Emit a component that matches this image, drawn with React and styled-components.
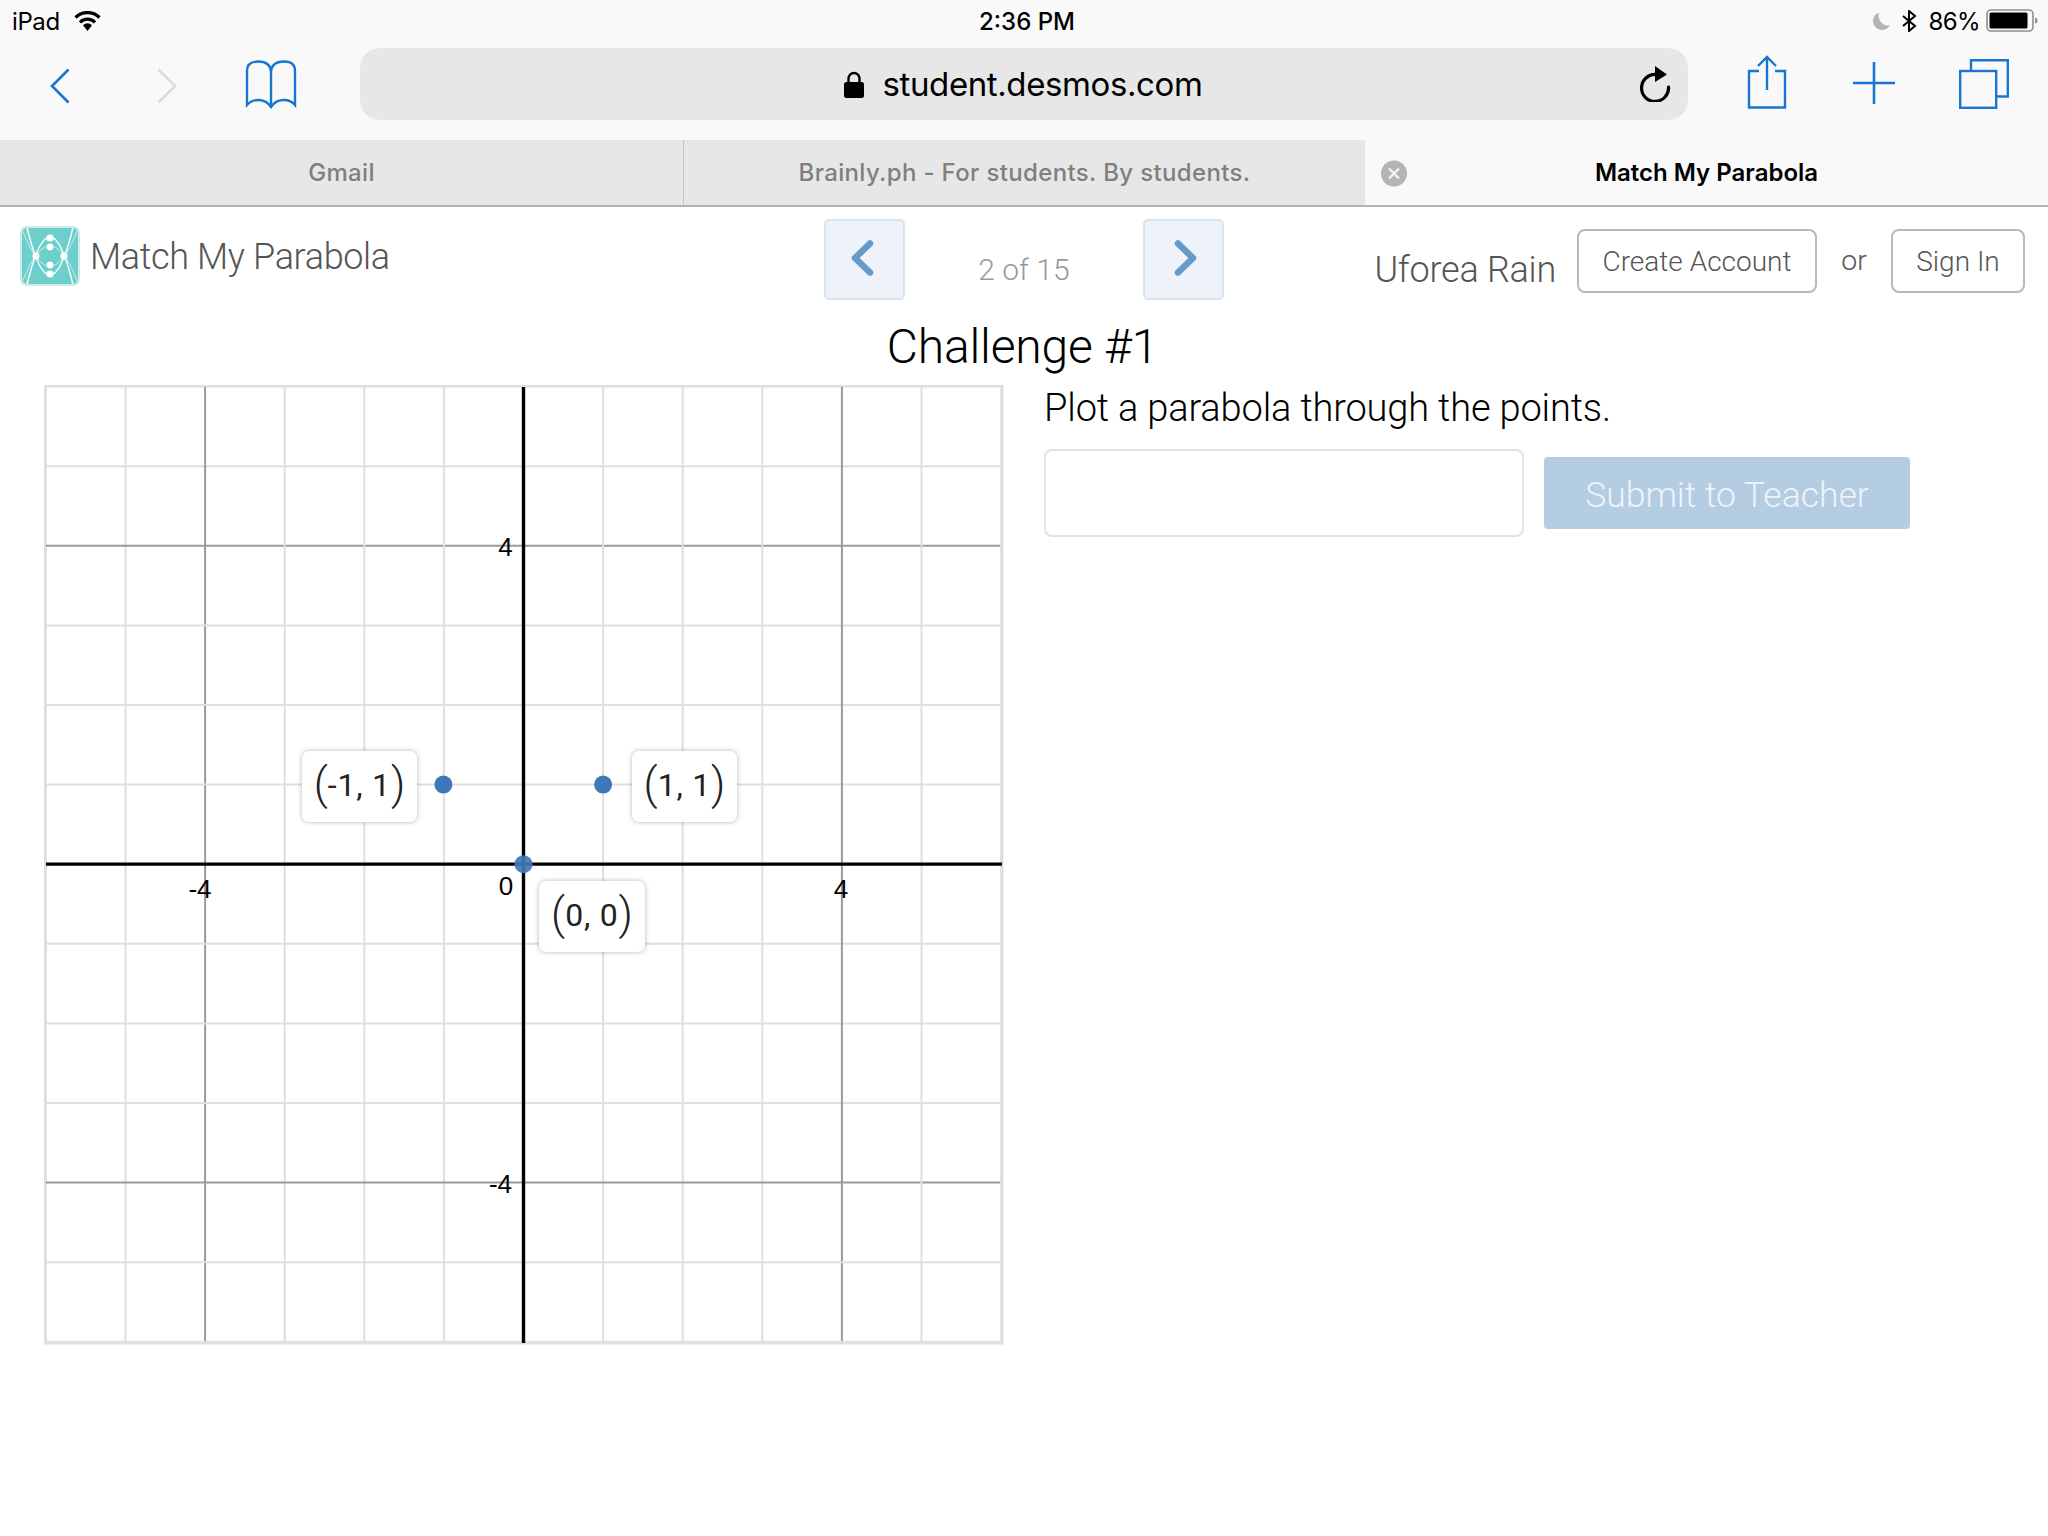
import React from "react";
import styled, { createGlobalStyle } from "styled-components";

const Global = createGlobalStyle`
  html, body { margin: 0; padding: 0; background: #fff; }
  #root { width: 2048px; height: 1536px; overflow: hidden; }
  * { box-sizing: border-box; }
`;

const SF = `Inter, "Liberation Sans", sans-serif`;
const HN = `Roboto, "Liberation Sans", sans-serif`;

const Page = styled.div`
  width: 2048px;
  height: 1536px;
  background: #fff;
  display: flex;
  flex-direction: column;
  font-family: ${SF};
`;

/* ---------- iOS chrome ---------- */
const StatusBar = styled.div`
  height: 48px;
  background: #f9f9f9;
  display: grid;
  grid-template-columns: 1fr auto 1fr;
  align-items: center;
  padding: 0 10px 6px 12px;
  font-size: 24px;
  color: #000;
`;
const StatusLeft = styled.div`
  display: flex;
  align-items: center;
  gap: 14px;
  letter-spacing: -0.4px;
`;
const Clock = styled.div`
  font-weight: 500;
  font-size: 24px;
  letter-spacing: 0;
  transform: translateX(2px);
`;
const StatusRight = styled.div`
  display: flex;
  align-items: center;
  justify-content: flex-end;
  gap: 12px;
  letter-spacing: -0.6px;
`;
const BatteryIcon = styled.svg`
  margin-left: -6px;
`;
const Toolbar = styled.div`
  height: 92px;
  background: #f9f9f9;
  display: flex;
  align-items: flex-start;
  color: #1876d2;
`;
const ToolSlot = styled.div`
  width: ${(p) => p.$w}px;
  height: 72px;
  flex: none;
  display: flex;
  align-items: center;
  justify-content: center;
  padding-top: ${(p) => p.$pt || 0}px;
  padding-bottom: ${(p) => p.$pb || 0}px;
`;
const UrlBar = styled.div`
  width: 1328px;
  height: 72px;
  margin-left: ${(p) => p.$ml}px;
  flex: none;
  background: #e7e7e7;
  border-radius: 20px;
  position: relative;
  display: flex;
  align-items: center;
  justify-content: center;
  gap: 19px;
  padding-right: 2px;
`;
const UrlText = styled.span`
  font-size: 33px;
  color: #000;
  font-weight: 400;
  letter-spacing: -0.4px;
`;
const ReloadBtn = styled.div`
  position: absolute;
  left: 1279px;
  top: 18px;
  display: flex;
`;
const TabBar = styled.div`
  height: 67px;
  flex: none;
  display: grid;
  grid-template-columns: 684px 681px 683px;
  border-bottom: 2px solid #b4b4b4;
`;
const Tab = styled.div`
  position: relative;
  display: flex;
  align-items: center;
  justify-content: center;
  background: ${(p) => (p.$active ? "#f9f9f9" : "#e7e7e7")};
  color: ${(p) => (p.$active ? "#000" : "#7f7f7f")};
  font-size: 24px;
  font-weight: ${(p) => (p.$active ? 600 : 500)};
  letter-spacing: ${(p) => (p.$active ? "0" : "0.35px")};
  border-right: ${(p) => (p.$divider ? "1px solid #c4c4c4" : "none")};
`;
const TabClose = styled.div`
  position: absolute;
  left: 16px;
  top: 20px;
  display: flex;
`;

/* ---------- app header ---------- */
const Header = styled.header`
  height: 103px;
  flex: none;
  display: flex;
  align-items: flex-start;
`;
const Brand = styled.div`
  width: 824px;
  flex: none;
  display: flex;
  align-items: center;
  gap: 10px;
  padding: 18px 0 0 20px;
`;
const BrandName = styled.div`
  font-family: ${HN};
  font-weight: 300;
  font-size: 36px;
  color: #555;
  letter-spacing: -0.35px;
  line-height: 60px;
  padding-top: 2px;
`;
const Pager = styled.div`
  width: 400px;
  flex: none;
  display: flex;
  justify-content: space-between;
  padding-top: 12px;
`;
const PageBtn = styled.div`
  width: 81px;
  height: 81px;
  background: #edf3f9;
  border: 2px solid #d8e4ef;
  border-radius: 5px;
  display: flex;
  align-items: center;
  justify-content: center;
  padding-bottom: 3px;
  padding-right: ${(p) => (p.$dir === "left" ? 5 : 0)}px;
  padding-left: ${(p) => (p.$dir === "right" ? 4 : 0)}px;
`;
const PageCount = styled.div`
  font-family: ${HN};
  font-weight: 300;
  font-size: 30px;
  color: #999;
  line-height: 36px;
  margin-top: 33px;
`;
const Account = styled.div`
  flex: 1;
  display: flex;
  align-items: flex-start;
  padding: 22px 23px 0 0;
  justify-content: flex-end;
`;
const UserName = styled.div`
  font-family: ${HN};
  font-weight: 300;
  font-size: 36px;
  color: #555;
  line-height: 64px;
  margin: 9px 21px 0 0;
  letter-spacing: -0.25px;
`;
const OutlineBtn = styled.div`
  height: 64px;
  width: ${(p) => p.$w}px;
  border: 2px solid #b9b9b9;
  border-radius: 8px;
  font-family: ${HN};
  font-weight: 300;
  font-size: 28px;
  color: #555;
  display: flex;
  align-items: center;
  justify-content: center;
`;
const OrText = styled.div`
  font-family: ${HN};
  font-weight: 300;
  font-size: 28.5px;
  color: #555;
  line-height: 64px;
  width: 74px;
  text-align: center;
`;

/* ---------- content ---------- */
const Title = styled.h1`
  margin: 0;
  height: 75px;
  flex: none;
  font-family: ${HN};
  font-weight: 300;
  font-size: 48px;
  line-height: 74px;
  color: #000;
  text-align: center;
  padding-right: 3px;
  letter-spacing: -0.2px;
`;
const Main = styled.main`
  display: flex;
  align-items: flex-start;
  padding-left: 44px;
  gap: 40px;
`;
const Graph = styled.div`
  position: relative;
  width: 960px;
  height: 960px;
  flex: none;
`;
const PointCard = styled.div`
  position: absolute;
  height: 71px;
  padding-bottom: 3px;
  background: #fff;
  border-radius: 7px;
  box-shadow: 0 0 5px rgba(0, 0, 0, 0.3);
  font-family: Roboto, "Liberation Sans", sans-serif;
  font-weight: 400;
  font-size: 32px;
  color: #222;
  display: flex;
  align-items: center;
  justify-content: center;
  letter-spacing: 0.8px;
  white-space: pre;
`;
const Paren = styled.span`
  font-family: Roboto, "Liberation Sans", sans-serif;
  font-weight: 300;
  font-size: 44px;
  line-height: 1;
  letter-spacing: 0;
  transform: translateY(-1px);
`;
const Side = styled.section`
  display: flex;
  flex-direction: column;
`;
const Prompt = styled.p`
  margin: 0;
  font-family: ${HN};
  font-weight: 300;
  font-size: 38px;
  line-height: 46px;
  height: 64px;
  color: #000;
  letter-spacing: -0.15px;
`;
const AnswerRow = styled.div`
  display: flex;
  align-items: center;
  gap: 20px;
`;
const AnswerBox = styled.div`
  width: 480px;
  height: 88px;
  border: 2px solid #e2e2e2;
  border-radius: 8px;
  background: #fff;
`;
const SubmitBtn = styled.div`
  width: 366px;
  height: 72px;
  padding-top: 3px;
  background: #b5cde2;
  border-radius: 4px;
  color: #eef3f8;
  font-family: ${HN};
  font-weight: 300;
  font-size: 35.5px;
  display: flex;
  align-items: center;
  justify-content: center;
`;

/* ---------- drawings ---------- */
const Wifi = () => (
  <svg width="27" height="20" viewBox="0 0 27 20">
    <path d="M1.5 6.5A17 17 0 0 1 25.5 6.5" fill="none" stroke="#000" strokeWidth="3.2" />
    <path d="M6 11.3A10.5 10.5 0 0 1 21 11.3" fill="none" stroke="#000" strokeWidth="3.2" />
    <path d="M9 14.2A6.4 6.4 0 0 1 18 14.2L13.5 20Z" fill="#000" />
  </svg>
);
const Moon = () => (
  <svg width="18" height="18" viewBox="0 0 18 18">
    <path d="M7 0.5A9 9 0 1 0 17.8 13.5A10 10 0 0 1 7 0.5Z" fill="#b4b4b4" />
  </svg>
);
const Bluetooth = () => (
  <svg width="15" height="22" viewBox="0 0 15 22">
    <path d="M1 6L13 16L7 21V1L13 6L1 16" fill="none" stroke="#000" strokeWidth="2" />
  </svg>
);
const Battery = () => (
  <BatteryIcon width="52" height="24" viewBox="0 0 52 24">
    <rect x="1" y="1" width="46" height="21" rx="4" fill="none" stroke="#8e8e8e" strokeWidth="1.6" />
    <rect x="3.5" y="3.5" width="38" height="16" rx="1.5" fill="#000" />
    <path d="M49 8.5C51 9 51.5 10 51.5 11.5S51 14 49 14.5Z" fill="#8e8e8e" />
  </BatteryIcon>
);
const ChevronLine = ({ dir, color }) => (
  <svg width="20" height="36" viewBox="0 0 20 36">
    <path
      d={dir === "left" ? "M18.5 1.5L2 18L18.5 34.5" : "M1.5 1.5L18 18L1.5 34.5"}
      fill="none"
      stroke={color}
      strokeWidth="2.6"
    />
  </svg>
);
const Book = () => (
  <svg width="52" height="49" viewBox="0 0 52 49" fill="none" stroke="#1876d2" strokeWidth="2.4">
    <path d="M26 13C26 5 21 1.5 13 1.5C5 1.5 2 5 2 11V45C8 38 20 38 26 47C32 38 44 38 50 45V11C50 5 47 1.5 39 1.5C31 1.5 26 5 26 13V45" />
  </svg>
);
const Lock = () => (
  <svg width="20" height="27" viewBox="0 0 20 27">
    <path d="M4.5 12V7.5A5.5 5.5 0 0 1 15.5 7.5V12" fill="none" stroke="#000" strokeWidth="2.4" />
    <rect x="0" y="11" width="20" height="16" rx="2.5" fill="#000" />
  </svg>
);
const Reload = () => (
  <svg width="32" height="36" viewBox="0 0 32 36">
    <path d="M17 8.5A13.5 13.5 0 1 0 29.5 21" fill="none" stroke="#000" strokeWidth="3.2" strokeLinecap="round" />
    <path d="M16 0L28 8.5L16 16Z" fill="#000" />
  </svg>
);
const Share = () => (
  <svg width="40" height="54" viewBox="0 0 40 54" fill="none" stroke="#1876d2" strokeWidth="2.4">
    <path d="M12 16H2V52.5H38V16H28" />
    <path d="M20 35V2M11 11L20 2L29 11" />
  </svg>
);
const Plus = () => (
  <svg width="42" height="42" viewBox="0 0 42 42" stroke="#1876d2" strokeWidth="2.6">
    <path d="M21 0V42M0 21H42" />
  </svg>
);
const Tabs = () => (
  <svg width="50" height="50" viewBox="0 0 50 50" fill="none" stroke="#1876d2" strokeWidth="2.4">
    <rect x="1.2" y="12" width="36" height="36.8" />
    <path d="M12 12V1.2H48.8V37.5H38" />
  </svg>
);
const CloseDot = () => (
  <svg width="26" height="27" viewBox="0 0 26 27">
    <circle cx="13" cy="13.5" r="13" fill="#b4b4b4" />
    <path d="M8 8.5L18 18.5M18 8.5L8 18.5" stroke="#f4f4f4" strokeWidth="2.4" />
  </svg>
);
const PageChevron = ({ dir }) => (
  <svg width="24" height="36" viewBox="0 0 24 36">
    <path
      d={dir === "left" ? "M20 3.5L5 18L20 32.5" : "M4 3.5L19 18L4 32.5"}
      fill="none"
      stroke="#659bc9"
      strokeWidth="6.6"
      strokeLinecap="round"
      strokeLinejoin="round"
    />
  </svg>
);
const Logo = () => (
  <svg width="60" height="60" viewBox="0 0 60 60" style={{ flex: "none" }}>
    <defs>
      <clipPath id="logoclip">
        <rect x="1" y="1" width="58" height="58" rx="6" />
      </clipPath>
    </defs>
    <rect x="1" y="1" width="58" height="58" rx="6" fill="#6dcfcb" />
    <g clipPath="url(#logoclip)" fill="none" stroke="#fff">
      <path d="M6.9 59Q30 -37 53.1 59" strokeWidth="1.4" />
      <path d="M6.9 1Q30 97 53.1 1" strokeWidth="1.4" />
      <path d="M2 57Q30 -17 58 57" strokeWidth="0.9" opacity="0.7" />
      <path d="M2 3Q30 77 58 3" strokeWidth="0.9" opacity="0.7" />
    </g>
    <g fill="#fff">
      <circle cx="30" cy="12" r="3.6" />
      <circle cx="30" cy="21" r="3.4" />
      <circle cx="30" cy="39" r="3.4" />
      <circle cx="30" cy="48" r="3.6" />
      <circle cx="16" cy="30" r="3.6" />
      <circle cx="44" cy="30" r="3.6" />
    </g>
    <rect x="1" y="1" width="58" height="58" rx="6" fill="none" stroke="#d2e9e8" strokeWidth="2" />
  </svg>
);

/* Graph paper: 959 px wide, 79.6 px per unit, origin at (479.5, 479.2) */
const UNIT = 79.6;
const OX = 479.5;
const OY = 479.2;
const steps = [-6, -5, -4, -3, -2, -1, 1, 2, 3, 4, 5, 6];
const PlotPaper = () => (
  <svg width="960" height="960" viewBox="0 0 960 960">
    <rect x="0.75" y="0.75" width="958" height="958" fill="#fff" stroke="#dedede" strokeWidth="1.5" />
    {steps.map((n) => {
      const major = Math.abs(n) === 4;
      const stroke = major ? "#9a9a9a" : "#dfdfdf";
      return (
        <g key={n} stroke={stroke} strokeWidth="2">
          <line x1={OX + n * UNIT} x2={OX + n * UNIT} y1="2" y2="958" />
          <line y1={OY + n * UNIT} y2={OY + n * UNIT} x1="2" x2="958" />
        </g>
      );
    })}
    <line x1={OX} x2={OX} y1="2" y2="958" stroke="#000" strokeWidth="3.4" />
    <line y1={OY} y2={OY} x1="2" x2="958" stroke="#000" strokeWidth="3.2" />
    <g fontFamily="'Liberation Sans', sans-serif" fontSize="26" fill="#000" textAnchor="middle">
      <text x={OX - 18} y={171}>4</text>
      <text x={OX - 23} y={808}>-4</text>
      <text x={156} y={513}>-4</text>
      <text x={797} y={513}>4</text>
      <text x={462} y={510}>0</text>
    </g>
    <g fill="#3f78b8">
      <circle cx={OX - UNIT - 0.5} cy={OY - UNIT} r="9" />
      <circle cx={OX + UNIT} cy={OY - UNIT} r="9" />
      <circle cx={OX} cy={OY} r="9" opacity="0.92" />
    </g>
  </svg>
);

const labels = [
  { text: "-1, 1", left: 258, top: 366, width: 115 },
  { text: "1, 1", left: 588, top: 366, width: 105 },
  { text: "0, 0", left: 495, top: 496, width: 106 },
];

export default function App() {
  return (
    <Page>
      <Global />
      <StatusBar>
        <StatusLeft>
          <span>iPad</span>
          <Wifi />
        </StatusLeft>
        <Clock>2:36 PM</Clock>
        <StatusRight>
          <Moon />
          <Bluetooth />
          <span>86%</span>
          <Battery />
        </StatusRight>
      </StatusBar>
      <Toolbar>
        <ToolSlot $w={120} $pt={3}><ChevronLine dir="left" color="#1876d2" /></ToolSlot>
        <ToolSlot $w={93} $pt={3}><ChevronLine dir="right" color="#dcdcdc" /></ToolSlot>
        <ToolSlot $w={116}><Book /></ToolSlot>
        <UrlBar $ml={31}>
          <Lock />
          <UrlText>student.desmos.com</UrlText>
          <ReloadBtn><Reload /></ReloadBtn>
        </UrlBar>
        <ToolSlot $w={59} />
        <ToolSlot $w={40} $pb={5}><Share /></ToolSlot>
        <ToolSlot $w={66} />
        <ToolSlot $w={42} $pb={2}><Plus /></ToolSlot>
        <ToolSlot $w={64} />
        <ToolSlot $w={50}><Tabs /></ToolSlot>
      </Toolbar>
      <TabBar>
        <Tab $divider>Gmail</Tab>
        <Tab>Brainly.ph - For students. By students.</Tab>
        <Tab $active>
          <TabClose><CloseDot /></TabClose>
          Match My Parabola
        </Tab>
      </TabBar>
      <Header>
        <Brand>
          <Logo />
          <BrandName>Match My Parabola</BrandName>
        </Brand>
        <Pager>
          <PageBtn $dir="left"><PageChevron dir="left" /></PageBtn>
          <PageCount>2 of 15</PageCount>
          <PageBtn $dir="right"><PageChevron dir="right" /></PageBtn>
        </Pager>
        <Account>
          <UserName>Uforea Rain</UserName>
          <OutlineBtn $w={240}>Create Account</OutlineBtn>
          <OrText>or</OrText>
          <OutlineBtn $w={134}>Sign In</OutlineBtn>
        </Account>
      </Header>
      <Title>Challenge #1</Title>
      <Main>
        <Graph>
          <PlotPaper />
          {labels.map((l) => (
            <PointCard key={l.text} style={{ left: l.left, top: l.top, width: l.width }}>
              <Paren>(</Paren>
              {l.text}
              <Paren>)</Paren>
            </PointCard>
          ))}
        </Graph>
        <Side>
          <Prompt>Plot a parabola through the points.</Prompt>
          <AnswerRow>
            <AnswerBox />
            <SubmitBtn>Submit to Teacher</SubmitBtn>
          </AnswerRow>
        </Side>
      </Main>
    </Page>
  );
}
